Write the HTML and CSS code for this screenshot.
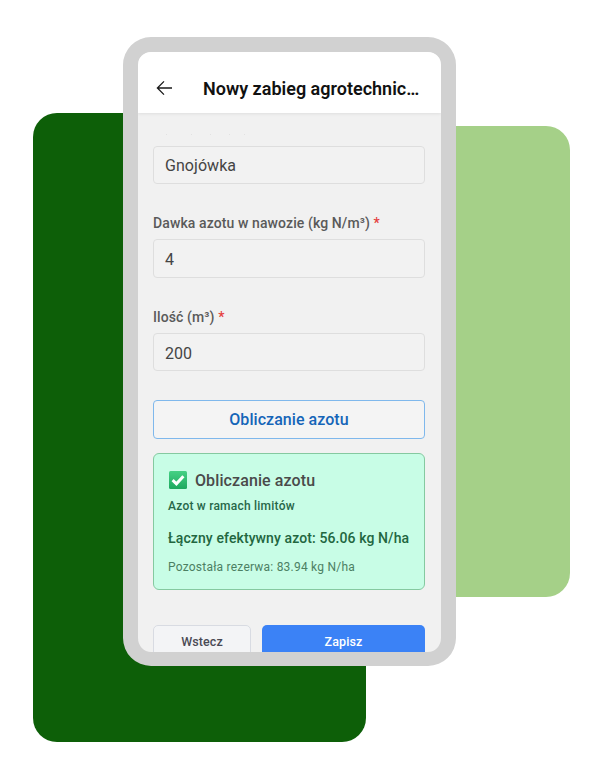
FILE: index.html
```html
<!DOCTYPE html>
<html lang="pl">
<head>
<meta charset="utf-8">
<title>Nowy zabieg agrotechniczny</title>
<link rel="stylesheet" href="styles.css">
</head>
<body>
<div class="stage">
  <div class="shape shape-dark"></div>
  <div class="shape shape-light"></div>
  <div class="phone">
    <header class="appbar">
      <svg class="back" width="18" height="18" viewBox="0 0 18 18" fill="none" stroke="#1a1a1a" stroke-width="1.3"><path d="M17 9H2.8M9 2.4 2.4 9 9 15.6"/></svg>
      <h1 class="title">Nowy zabieg agrotechnic…</h1>
    </header>
    <main class="content">
      <div class="scroll-dots"></div>
      <div class="input">Gnojówka</div>
      <div class="field">
        <div class="label">Dawka azotu w nawozie (kg N/m³) <span class="req">*</span></div>
        <div class="input">4</div>
      </div>
      <div class="field">
        <div class="label">Ilość (m³) <span class="req">*</span></div>
        <div class="input">200</div>
      </div>
      <button class="calc">Obliczanie azotu</button>
      <section class="result">
        <div class="result-head">
          <svg class="check" width="18" height="18" viewBox="0 0 18 18"><defs><linearGradient id="checkfill" x1="0" y1="0" x2="0" y2="1"><stop offset="0" stop-color="#45d184"/><stop offset="1" stop-color="#1ea85f"/></linearGradient></defs><rect width="18" height="18" rx="1.5" fill="url(#checkfill)"/><path d="M3.6 9.2 7.4 12.8 14.4 5.2" fill="none" stroke="#fff" stroke-width="3"/></svg>
          <span class="head-text">Obliczanie azotu</span>
        </div>
        <div class="status">Azot w ramach limitów</div>
        <div class="total">Łączny efektywny azot: 56.06 kg N/ha</div>
        <div class="reserve">Pozostała rezerwa: 83.94 kg N/ha</div>
      </section>
      <div class="actions">
        <button class="btn-back">Wstecz</button>
        <button class="btn-save">Zapisz</button>
      </div>
    </main>
  </div>
</div>
</body>
</html>
```
FILE: styles.css
```css
* { box-sizing: border-box; }
html, body { margin: 0; height: 760px; background: #fff; overflow: hidden; }
body { font-family: Roboto, "Liberation Sans", sans-serif; }
.stage { position: relative; width: 600px; height: 760px; }
.shape { position: absolute; border-radius: 24px; }
.shape-dark { left: 33px; top: 113px; width: 333px; height: 629px; background: #0d5f08; }
.shape-light { left: 300px; top: 126px; width: 270px; height: 471px; background: #a5d088; }
.phone { position: absolute; left: 123px; top: 37px; width: 333px; height: 629px; border: 15px solid #d1d1d1; border-bottom-width: 14px; border-radius: 28px; background: #f1f1f1; overflow: hidden; display: flex; flex-direction: column; }
.appbar { flex: none; height: 61px; background: #fff; display: flex; align-items: center; padding: 11px 0 0 17px; gap: 30px; box-shadow: 0 1px 3px rgba(0,0,0,.08); position: relative; z-index: 1; }
.back { flex: none; }
.title { margin: 0; font-size: 18px; font-weight: 600; color: #111; white-space: nowrap; }
.content { flex: 1; padding: 0 16px 0 15px; overflow: hidden; }
.scroll-dots { width: 1px; height: 1px; margin: 21px 0 10.6px 13px; background: #e2e2e2; box-shadow: 25px 0 #e2e2e2, 44px 0 #e2e2e2, 63px 0 #e2e2e2, 78px 0 #e2e2e2; }
.input { height: 38.6px; border: 1px solid #dedede; border-radius: 4px; background: #f2f2f2; padding: 2px 11px 0; display: flex; align-items: center; font-size: 16px; letter-spacing: .05px; color: #444; }
.field { margin-top: 29px; }
.label { font-size: 14px; font-weight: 500; line-height: 20px; letter-spacing: .1px; color: #5a5a5a; margin-bottom: 6px; }
.req { color: #e53e3e; }
.calc { display: block; width: 100%; height: 38.6px; margin-top: 28.6px; border: 1px solid #7fb8ec; border-radius: 4px; background: #f4f4f4; font: 500 16px Roboto, sans-serif; letter-spacing: .05px; color: #1565b8; }
.result { margin-top: 14.8px; height: 136.4px; padding: 16px 14px; border: 1px solid #85c9a0; border-radius: 6px; background: #c8fde6; }
.result-head { display: flex; align-items: center; gap: 8px; font-size: 16px; font-weight: 500; letter-spacing: .1px; color: #4a4a4a; }
.head-text { padding-top: 1px; }
.check { margin-left: 1px; }
.status { margin-top: 9px; font-size: 12px; font-weight: 500; letter-spacing: .22px; color: #276749; }
.total { margin-top: 17px; font-size: 14px; font-weight: 500; letter-spacing: .1px; color: #22663f; }
.reserve { margin-top: 14px; font-size: 12px; letter-spacing: .22px; color: #4c8063; }
.actions { display: flex; gap: 11px; margin-top: 35.2px; }
.btn-back, .btn-save { height: 40px; border-radius: 5px; font: 500 12.5px Roboto, sans-serif; letter-spacing: .1px; padding: 0 0 6px; }
.btn-back { width: 98px; border: 1px solid #d8dbe2; background: #f3f4f6; color: #4a4a55; }
.btn-save { flex: 1; border: 0; background: #3b82f6; color: #fff; }
```
